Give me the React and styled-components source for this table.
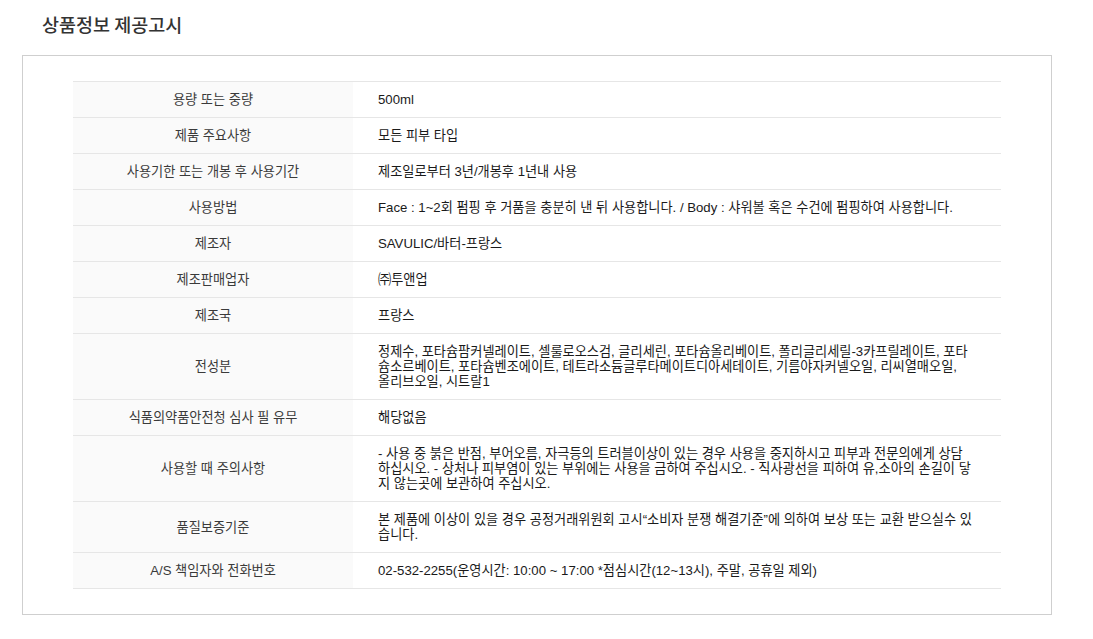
import * as React from "react";
import styled, { createGlobalStyle } from "styled-components";

const rows = [
  ["용량 또는 중량", "500ml"],
  ["제품 주요사항", "모든 피부 타입"],
  ["사용기한 또는 개봉 후 사용기간", "제조일로부터 3년/개봉후 1년내 사용"],
  [
    "사용방법",
    "Face : 1~2회 펌핑 후 거품을 충분히 낸 뒤 사용합니다. / Body : 샤워볼 혹은 수건에 펌핑하여 사용합니다.",
  ],
  ["제조자", "SAVULIC/바터-프랑스"],
  ["제조판매업자", "㈜투앤업"],
  ["제조국", "프랑스"],
  [
    "전성분",
    "정제수, 포타슘팜커넬레이트, 셀룰로오스검, 글리세린, 포타슘올리베이트, 폴리글리세릴-3카프릴레이트, 포타슘소르베이트, 포타슘벤조에이트, 테트라소듐글루타메이트디아세테이트, 기름야자커넬오일, 리씨열매오일, 올리브오일, 시트랄1",
  ],
  ["식품의약품안전청 심사 필 유무", "해당없음"],
  [
    "사용할 때 주의사항",
    "- 사용 중 붉은 반점, 부어오름, 자극등의 트러블이상이 있는 경우 사용을 중지하시고 피부과 전문의에게 상담하십시오. - 상처나 피부염이 있는 부위에는 사용을 금하여 주십시오. - 직사광선을 피하여 유,소아의 손길이 닿지 않는곳에 보관하여 주십시오.",
  ],
  [
    "품질보증기준",
    "본 제품에 이상이 있을 경우 공정거래위원회 고시“소비자 분쟁 해결기준”에 의하여 보상 또는 교환 받으실수 있습니다.",
  ],
  ["A/S 책임자와 전화번호", "02-532-2255(운영시간: 10:00 ~ 17:00 *점심시간(12~13시), 주말, 공휴일 제외)"],
];

export default function App() {
  return (
    <>
      <GlobalStyle />
      <Section>
        <Heading>상품정보 제공고시</Heading>
        <Box>
          <Table>
            <colgroup>
              <col style={{ width: 280 }} />
              <col />
            </colgroup>
            <tbody>
              {rows.map(([label, value]) => (
                <tr key={label}>
                  <Label>{label}</Label>
                  <Value>{value}</Value>
                </tr>
              ))}
            </tbody>
          </Table>
        </Box>
      </Section>
    </>
  );
}

const GlobalStyle = createGlobalStyle`
  body {
    margin: 0;
    background: #fff;
    font-family: "Liberation Sans", "Noto Sans CJK KR", sans-serif;
  }
`;

const Section = styled.div`
  width: 1030px;
  margin-left: 22px;
  padding-top: 12px;
`;

const Heading = styled.h2`
  margin: 0 0 19px 20px;
  font-size: 18.5px;
  line-height: 24px;
  font-weight: 500;
  color: #333;
  font-family: "Noto Sans CJK KR", sans-serif;
`;

const Box = styled.div`
  border: 1px solid #cfcfcf;
  padding: 25px 50px;
`;

const Table = styled.table`
  width: 100%;
  border-collapse: collapse;
  table-layout: fixed;
  border-top: 1px solid #e6e6e6;
  font-size: 13.2px;
  line-height: 15px;
`;

const Label = styled.th`
  background: #fafafa;
  color: #3a3a3a;
  font-weight: normal;
  text-align: center;
  vertical-align: middle;
  padding: 10px 12px;
  border-bottom: 1px solid #e6e6e6;
`;

const Value = styled.td`
  color: #1a1a1a;
  padding: 10px 29px 10px 25px;
  vertical-align: middle;
  word-break: break-all;
  border-bottom: 1px solid #e6e6e6;
`;
